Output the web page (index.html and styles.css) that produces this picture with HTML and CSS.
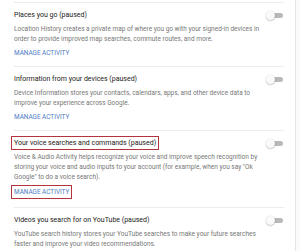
FILE: index.html
```html
<!DOCTYPE html>
<html>
<head>
    <meta charset="UTF-8">
    <title>Activity controls</title>
    <link rel="stylesheet" href="styles.css">
</head>
<body>
<div class="card">
    <div class="item">
        <div class="head">
            <span class="title">Places you go (paused)</span>
            <span class="toggle"><span class="knob"></span></span>
        </div>
        <p class="desc">Location History creates a private map of where you go with your signed-in devices in order to provide improved map searches, commute routes, and more.</p>
        <a class="manage">MANAGE ACTIVITY</a>
    </div>
    <div class="item">
        <div class="head">
            <span class="title">Information from your devices (paused)</span>
            <span class="toggle"><span class="knob"></span></span>
        </div>
        <p class="desc">Device Information stores your contacts, calendars, apps, and other device data to improve your experience across Google.</p>
        <a class="manage">MANAGE ACTIVITY</a>
    </div>
    <div class="item tall">
        <div class="head">
            <span class="title marked">Your voice searches and commands (paused)</span>
            <span class="toggle"><span class="knob"></span></span>
        </div>
        <p class="desc">Voice &amp; Audio Activity helps recognize your voice and improve speech recognition by storing your voice and audio inputs to your account (for example, when you say "Ok Google" to do a voice search).</p>
        <a class="manage marked">MANAGE ACTIVITY</a>
    </div>
    <div class="item">
        <div class="head">
            <span class="title">Videos you search for on YouTube (paused)</span>
            <span class="toggle"><span class="knob"></span></span>
        </div>
        <p class="desc">YouTube search history stores your YouTube searches to make your future searches faster and improve your video recommendations.</p>
    </div>
</div>
</body>
</html>
```
FILE: styles.css
```css
*{ margin:0; padding:0; }
body{
    background: #fafafa;
    font-family: Roboto, "Liberation Sans", sans-serif;
    overflow: hidden;
}
.card{
    width: 296px;
    height: 251px;
    background: #fff;
    border-right: 1px solid #e4e4e4;
    padding: 2px 11px 0 14px;
    box-sizing: border-box;
}
.item{
    border-top: 1px solid #ececec;
    padding: 7px 0 8px;
}
.head{
    display: flex;
    justify-content: space-between;
    align-items: center;
    height: 10px;
}
.title{
    font-size: 7px;
    line-height: 10px;
    color: #212121;
}
.desc{
    margin-top: 4px;
    width: 250px;
    font-size: 6.5px;
    line-height: 10px;
    color: #777;
}
.manage{
    display: block;
    width: fit-content;
    margin-top: 4px;
    height: 10px;
    font-size: 6.4px;
    line-height: 10px;
    color: #4a7bc4;
}
.marked{
    outline: 1.5px solid #b3343f;
    outline-offset: 1px;
    padding: 0 1px;
    margin-left: -1px;
}
.tall .manage{
    margin-top: 5px;
}
.tall{
    padding-bottom: 10px;
}
.toggle{
    position: relative;
    width: 16px;
    height: 5px;
    margin-right: 1px;
    border-radius: 3px;
    background: #b9b9b9;
}
.toggle .knob{
    position: absolute;
    left: -1px;
    top: -2px;
    width: 9px;
    height: 9px;
    border-radius: 50%;
    background: #fafafa;
    box-shadow: 0 0.5px 1.5px rgba(0,0,0,0.35);
}
```
